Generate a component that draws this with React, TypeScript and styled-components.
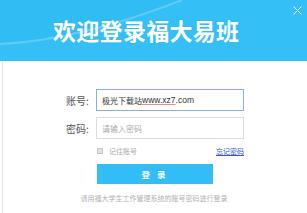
import React from "react";
import styled, { createGlobalStyle } from "styled-components";

const Global = createGlobalStyle`
  html, body { margin: 0; padding: 0; background: #ffffff; }
  body { font-family: "Liberation Sans", "Noto Sans CJK SC", sans-serif; }
  * { box-sizing: border-box; }
`;

const Dialog = styled.div`
  width: 307px;
  height: 213px;
  background: #ffffff;
  display: flex;
  flex-direction: column;
  overflow: hidden;
`;

const Header = styled.div`
  position: relative;
  height: 61px;
  background: #34bff6;
  display: flex;
  align-items: center;
  padding-left: 53px;
  padding-bottom: 1px;
  overflow: hidden;
`;

const HeaderArt = styled.svg`
  position: absolute;
  left: 0;
  top: 0;
`;

const Title = styled.h1`
  position: relative;
  margin: 0;
  font-family: "Noto Sans CJK SC", sans-serif;
  font-weight: 700;
  font-size: 23px;
  line-height: 1;
  letter-spacing: 0.3px;
  color: #ffffff;
`;

const Close = styled.svg`
  position: absolute;
  right: 5px;
  top: 6px;
`;

const Body = styled.div`
  flex: 1;
  border-left: 1px solid #e4e4e4;
  margin-left: 2px;
  display: flex;
  flex-direction: column;
  padding-top: 28px;
`;

const Form = styled.div`
  margin-left: 63px;
  display: flex;
  flex-direction: column;
  gap: 6px;
`;

const Row = styled.div`
  display: flex;
  align-items: center;
`;

const Label = styled.span`
  width: 30px;
  font-family: "Noto Sans CJK SC", sans-serif;
  font-size: 10px;
  color: #555555;
`;

const Field = styled.div<{ $focused?: boolean }>`
  width: 148px;
  height: 22px;
  border: 1px solid ${(p) => (p.$focused ? "#8aaee9" : "#dddddd")};
  display: flex;
  align-items: center;
  padding-left: 5px;
  font-family: "Noto Sans CJK SC", sans-serif;
  font-size: 8px;
  color: ${(p) => (p.$focused ? "#333333" : "#aaaaaa")};
  white-space: nowrap;
`;

const Url = styled.span`
  font-family: "Liberation Sans", sans-serif;
  font-size: 8.5px;
`;

const Squiggle = styled.span`
  text-decoration: underline solid #e88a8a;
  text-decoration-thickness: 1px;
  text-underline-offset: 1px;
`;

const Options = styled.div`
  margin-left: 30px;
  width: 148px;
  height: 12px;
  display: flex;
  align-items: center;
  justify-content: space-between;
`;

const Remember = styled.label`
  display: flex;
  align-items: center;
  gap: 6px;
  padding-left: 1px;
  font-family: "Noto Sans CJK SC", sans-serif;
  font-size: 7px;
  color: #aaaaaa;
`;

const Box = styled.span`
  width: 6px;
  height: 6px;
  background: #e2e2e2;
  border: 1px solid #c8c8c8;
`;

const Forgot = styled.a`
  font-family: "Noto Sans CJK SC", sans-serif;
  font-size: 7px;
  color: #3a55c8;
  text-decoration: underline;
`;

const LoginButton = styled.button`
  margin: 1px 0 0 31px;
  width: 116px;
  height: 20px;
  border: none;
  background: #33bdf6;
  color: #ffffff;
  font-family: "Noto Sans CJK SC", sans-serif;
  font-weight: 700;
  font-size: 8.5px;
  letter-spacing: 7px;
  padding: 0 0 0 4px;
  display: flex;
  align-items: center;
  justify-content: center;
`;

const Footer = styled.p`
  margin: 9px 0 0 -2px;
  text-align: center;
  font-family: "Noto Sans CJK SC", sans-serif;
  font-size: 7px;
  line-height: 10px;
  color: #b0b0b0;
`;

export default function App() {
  return (
    <>
      <Global />
      <Dialog>
        <Header>
          <HeaderArt width="307" height="61" viewBox="0 0 307 61">
            <path d="M0,44 Q80,40 182,0 L0,0 Z" fill="#2fb9f2" opacity="0.35" />
            <path d="M182,0 Q80,40 0,44" fill="none" stroke="#ffffff" strokeWidth="2" opacity="0.22" />
          </HeaderArt>
          <Title>欢迎登录福大易班</Title>
          <Close width="9" height="9" viewBox="0 0 9 9">
            <path d="M0.5,0.5 L8.5,8.5 M8.5,0.5 L0.5,8.5" stroke="#ffffff" strokeWidth="1" opacity="0.9" />
          </Close>
        </Header>
        <Body>
          <Form>
            <Row>
              <Label>账号:</Label>
              <Field $focused>
                极光下载站<Url><Squiggle>www.xz7</Squiggle>.com</Url>
              </Field>
            </Row>
            <Row>
              <Label>密码:</Label>
              <Field>请输入密码</Field>
            </Row>
            <Options>
              <Remember>
                <Box />
                记住账号
              </Remember>
              <Forgot>忘记密码</Forgot>
            </Options>
            <LoginButton>登录</LoginButton>
          </Form>
          <Footer>请用福大学生工作管理系统的账号密码进行登录</Footer>
        </Body>
      </Dialog>
    </>
  );
}
